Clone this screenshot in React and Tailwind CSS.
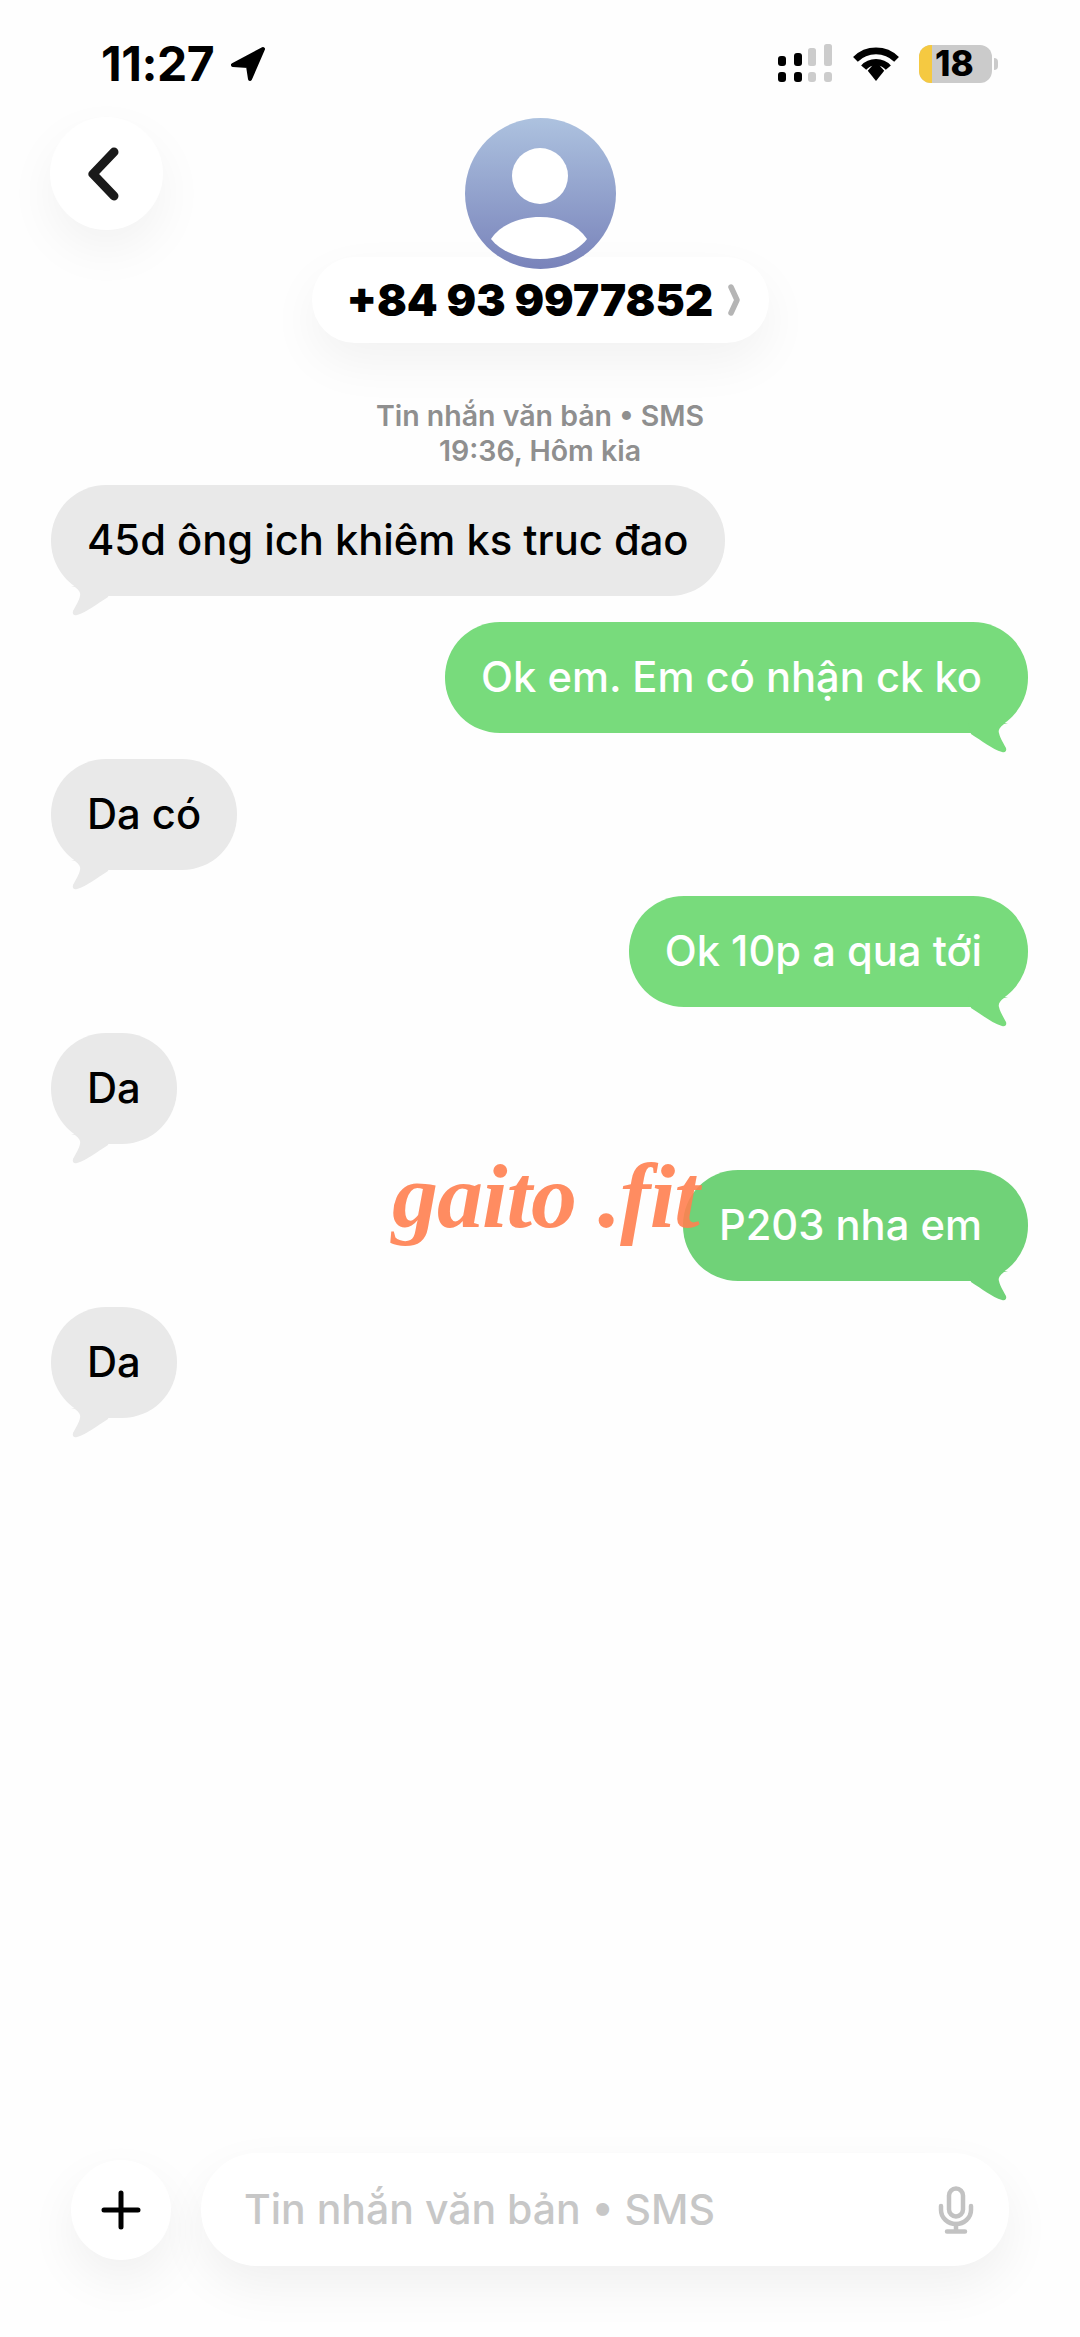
import React from 'react';

function Tail({ color, flip }) {
  return (
    <svg
      viewBox="0 0 60 30"
      className={`absolute bottom-[-20px] w-[60px] h-[30px] ${flip ? 'right-0 -scale-x-100' : 'left-0'}`}
    >
      <path
        d="M20 0 L24 1 C28 4 30 7 29 10 C28 15 24 21 22 25 C21 28 23 30 26 29 C36 26 46 18 57 11 L60 0 Z"
        fill={color}
      />
    </svg>
  );
}

function Bubble({ text, me, color }) {
  const bg = color || (me ? '#78db7c' : '#e9e9e9');
  return (
    <div className={`flex ${me ? 'justify-end' : 'justify-start'}`}>
      <div
        className={`relative h-[111px] rounded-[55px] flex items-center text-[41.7px] font-medium whitespace-nowrap ${
          me ? 'pl-[36px] pr-[46px] text-white' : 'px-[36px] text-black'
        }`}
        style={{ backgroundColor: bg }}
      >
        {text}
        <Tail color={bg} flip={me} />
      </div>
    </div>
  );
}

function StatusBar() {
  return (
    <div className="h-[117px] pt-[44px] pl-[101px] pr-[82px] flex justify-between items-start">
      <div className="flex items-center gap-[16px] h-[40px]">
        <span className="text-[48px] font-bold leading-none tracking-[-0.5px] text-black">11:27</span>
        <svg viewBox="0 0 36 36" className="w-[36px] h-[36px]">
          <path d="M33 3 L3 19 L18 20 L20 33 Z" fill="#000" stroke="#000" strokeWidth="4" strokeLinejoin="round" />
        </svg>
      </div>
      <div className="flex items-center h-[39px]">
        <svg viewBox="0 0 56 39" className="w-[56px] h-[39px]">
          <rect x="0" y="12" width="8" height="10" rx="3" fill="#000" />
          <rect x="16" y="9" width="8" height="13" rx="3" fill="#000" />
          <rect x="30" y="4" width="8" height="18" rx="2.5" fill="#cccccc" />
          <rect x="46" y="0" width="8" height="22" rx="2.5" fill="#cccccc" />
          <rect x="0" y="28" width="8" height="10" rx="3" fill="#000" />
          <rect x="16" y="28" width="8" height="10" rx="3" fill="#000" />
          <rect x="30" y="28" width="8" height="10" rx="3" fill="#cccccc" />
          <rect x="46" y="28" width="8" height="10" rx="3" fill="#cccccc" />
        </svg>
        <svg viewBox="0 0 46 36" className="w-[48px] h-[37px] ml-[18px]" fill="none" stroke="#000" strokeWidth="6.5">
          <path d="M3 14 C14 3 32 3 43 14" />
          <path d="M11 22 C17 15 29 15 35 22" />
          <path d="M15 25 L23 16 L31 25 L23 35 Z" fill="#000" stroke="none" />
        </svg>
        <div className="ml-[19px] w-[73px] h-[38px] rounded-[12px] bg-[#cbcbcb] flex">
          <div className="w-[13px] rounded-l-[12px] bg-[#f5c941]" />
          <div className="flex-1 flex items-center pl-[3px] text-[35px] font-extrabold leading-none text-black">18</div>
        </div>
        <div className="ml-[2px] w-[4px] h-[12px] rounded-r-full bg-[#cbcbcb]" />
      </div>
    </div>
  );
}

function Header() {
  return (
    <div className="relative px-[50px] pt-px">
      <button className="absolute left-[50px] top-0 w-[113px] h-[113px] rounded-full bg-white flex items-center justify-center shadow-[0_20px_50px_rgba(0,0,0,0.05)]">
        <svg viewBox="0 0 40 60" className="w-[40px] h-[60px] -ml-[10px]" fill="none" stroke="#1a1a1a" strokeWidth="9" strokeLinecap="round" strokeLinejoin="round">
          <path d="M32 8 L11 30 L32 52" />
        </svg>
      </button>
      <div className="flex flex-col items-center">
        <div className="relative z-10 w-[151px] h-[151px] rounded-full bg-gradient-to-b from-[#adc2df] to-[#7983ba] -mb-[12px]">
          <svg viewBox="0 0 151 151" className="w-[151px] h-[151px]">
            <circle cx="75" cy="58" r="28" fill="#fff" />
            <path d="M26 121 C36 106 56 99 75 99 C94 99 112 106 122 121 C112 134 94 141 75 141 C56 141 36 134 26 121 Z" fill="#fff" />
          </svg>
        </div>
        <div className="h-[86px] w-[457px] rounded-[43px] bg-white pl-[35px] flex items-center gap-[14px] shadow-[0_20px_50px_rgba(0,0,0,0.05)]">
          <span className="text-[44px] font-black leading-none text-black whitespace-nowrap">+84 93 9977852</span>
          <svg viewBox="0 0 14 32" className="w-[14px] h-[32px]" fill="none" stroke="#b5b5b5" strokeWidth="5.5" strokeLinecap="round" strokeLinejoin="round">
            <path d="M4 3 L10 16 L4 29" />
          </svg>
        </div>
      </div>
    </div>
  );
}

function Composer() {
  return (
    <div className="px-[71px] pb-[71px] flex items-center gap-[30px]">
      <button className="w-[100px] h-[100px] rounded-full bg-white flex items-center justify-center shrink-0 shadow-[0_20px_50px_rgba(0,0,0,0.06)]">
        <svg viewBox="0 0 40 40" className="w-[40px] h-[40px]" stroke="#000" strokeWidth="5" strokeLinecap="round">
          <path d="M20 3 V37 M3 20 H37" />
        </svg>
      </button>
      <div className="flex-1 h-[113px] rounded-[56px] bg-white pl-[43px] pr-[35px] flex items-center justify-between shadow-[0_20px_50px_rgba(0,0,0,0.06)]">
        <span className="text-[41px] font-medium text-[#c7c7c7] whitespace-nowrap">Tin nhắn văn bản • SMS</span>
        <svg viewBox="0 0 36 48" className="w-[36px] h-[48px]" fill="none" stroke="#c2c2c2" strokeWidth="4.5" strokeLinecap="round">
          <rect x="11" y="2.5" width="14" height="28" rx="7" />
          <path d="M3 20 V24 C3 32 10 38 18 38 C26 38 33 32 33 24 V20" />
          <path d="M18 38 V45 M9 45.5 H27" />
        </svg>
      </div>
    </div>
  );
}

export default function App() {
  return (
    <div className="relative w-[1080px] h-screen bg-[#fefefe] flex flex-col overflow-hidden font-[Inter,sans-serif]">
      <StatusBar />
      <Header />

      <div className="mt-[55px] text-center text-[28.5px] leading-[35px] font-semibold text-[#8f8f8f]">
        <div>Tin nhắn văn bản • SMS</div>
        <div>19:36, Hôm kia</div>
      </div>

      <main className="flex-1 mt-[17px] pl-[51px] pr-[52px] flex flex-col gap-[26px]">
        <Bubble text="45d ông ich khiêm ks truc đao" />
        <Bubble text="Ok em. Em có nhận ck ko" me />
        <Bubble text="Da có" />
        <Bubble text="Ok 10p a qua tới" me />
        <Bubble text="Da" />
        <Bubble text="P203 nha em" me color="#70d278" />
        <Bubble text="Da" />
      </main>

      <Composer />

      {/* watermark */}
      <div className="absolute left-[392px] top-[1150px] text-[92px] leading-none font-bold italic text-[#ff7f50]/90 font-['Liberation_Serif',serif] tracking-[-1px] whitespace-nowrap">
        gaito .fit
      </div>
    </div>
  );
}
